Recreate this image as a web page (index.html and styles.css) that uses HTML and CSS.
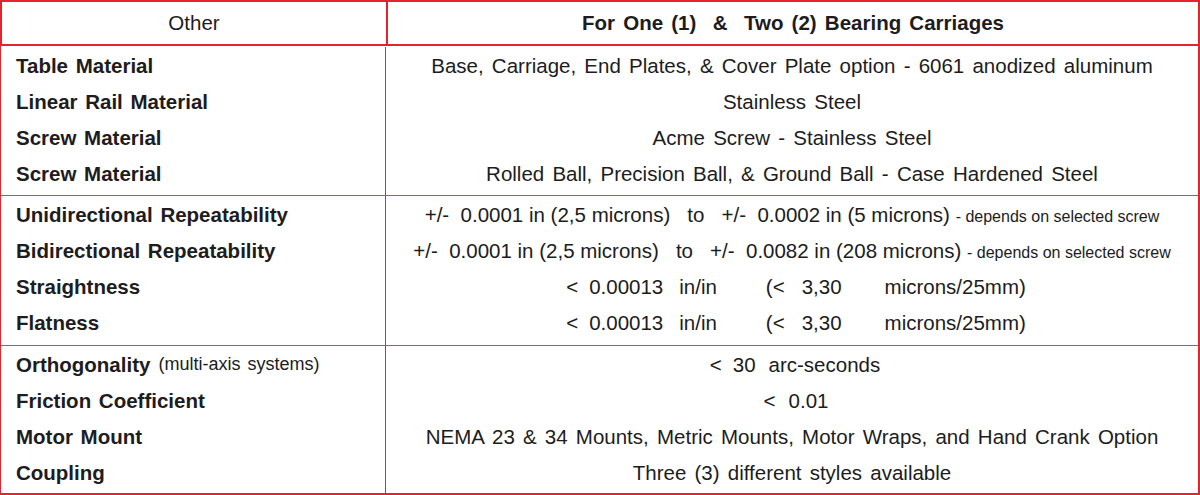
FILE: index.html
```html
<!DOCTYPE html>
<html>
<head>
<meta charset="utf-8">
<link rel="stylesheet" href="styles.css">
</head>
<body>
<div class="spec">
  <div class="head">
    <div class="hcell hleft">Other</div>
    <div class="hcell hright">For One (1) &nbsp;&amp;&nbsp; Two (2) Bearing Carriages</div>
  </div>
  <div class="body">
    <div class="section first">
      <div class="labels">
        <div class="row">Table Material</div>
        <div class="row">Linear Rail Material</div>
        <div class="row">Screw Material</div>
        <div class="row">Screw Material</div>
      </div>
      <div class="values">
        <div class="row">Base, Carriage, End Plates, &amp; Cover Plate option - 6061 anodized aluminum</div>
        <div class="row">Stainless Steel</div>
        <div class="row">Acme Screw - Stainless Steel</div>
        <div class="row">Rolled Ball, Precision Ball, &amp; Ground Ball - Case Hardened Steel</div>
      </div>
    </div>
    <div class="section">
      <div class="labels">
        <div class="row">Unidirectional Repeatability</div>
        <div class="row">Bidirectional Repeatability</div>
        <div class="row">Straightness</div>
        <div class="row">Flatness</div>
      </div>
      <div class="values">
        <div class="row"><span class="cond">+/-&nbsp; 0.0001 in (2,5 microns) &nbsp; to &nbsp; +/-&nbsp; 0.0002 in (5 microns) <span class="note">- depends on selected screw</span></span></div>
        <div class="row"><span class="cond">+/-&nbsp; 0.0001 in (2,5 microns) &nbsp; to &nbsp; +/-&nbsp; 0.0082 in (208 microns) <span class="note">- depends on selected screw</span></span></div>
        <div class="row"><span class="meas"><span>&lt;</span><span class="g1">0.00013</span><span class="g2">in/in</span><span class="g3">(&lt;</span><span class="g4">3,30</span><span class="g5">microns/25mm)</span></span></div>
        <div class="row"><span class="meas"><span>&lt;</span><span class="g1">0.00013</span><span class="g2">in/in</span><span class="g3">(&lt;</span><span class="g4">3,30</span><span class="g5">microns/25mm)</span></span></div>
      </div>
    </div>
    <div class="section last">
      <div class="labels">
        <div class="row">Orthogonality <span class="sub">(multi-axis systems)</span></div>
        <div class="row">Friction Coefficient</div>
        <div class="row">Motor Mount</div>
        <div class="row">Coupling</div>
      </div>
      <div class="values">
        <div class="row"><span class="meas2"><span>&lt;</span><span class="h1">30</span><span class="h2">arc-seconds</span></span></div>
        <div class="row"><span class="meas2 shift"><span>&lt;</span><span class="h3">0.01</span></span></div>
        <div class="row">NEMA 23 &amp; 34 Mounts, Metric Mounts, Motor Wraps, and Hand Crank Option</div>
        <div class="row">Three (3) different styles available</div>
      </div>
    </div>
  </div>
</div>
</body>
</html>
```

FILE: styles.css
```css
html, body {
  margin: 0;
  padding: 0;
  background: #ffffff;
}

body {
  font-family: "Liberation Sans", Arial, sans-serif;
  color: #201c1d;
  font-size: 20.5px;
}

.spec {
  width: 1200px;
  height: 495px;
  box-sizing: border-box;
}

.head {
  display: flex;
  height: 46px;
  box-sizing: border-box;
  border: 2px solid #e6232d;
}

.hcell {
  display: flex;
  align-items: center;
  justify-content: center;
  word-spacing: 2.5px;
}

.hleft {
  width: 384px;
  border-right: 2px solid #e6232d;
}

.hright {
  flex: 1;
  font-weight: bold;
}

.body {
  border-left: 1px solid #e6232d;
  border-right: 2px solid #e6232d;
  border-bottom: 2px solid #e6232d;
  height: 449px;
  box-sizing: border-box;
  display: flex;
  flex-direction: column;
}

.section {
  display: flex;
  height: 150px;
  box-sizing: border-box;
  border-bottom: 1px solid #ee3a45;
}

.section.first {
  padding-top: 1px;
}

.section.last {
  border-bottom: none;
  flex: 1;
}

.labels {
  width: 385px;
  border-right: 1px solid #e6232d;
  box-sizing: border-box;
  padding-left: 15px;
  font-weight: bold;
  word-spacing: 2px;
}

.values {
  flex: 1;
  text-align: center;
  word-spacing: 2.5px;
}

.row {
  height: 36px;
  padding-top: 1px;
  box-sizing: border-box;
  display: flex;
  align-items: center;
  white-space: nowrap;
}

.values .row {
  justify-content: center;
}

.sub {
  font-weight: normal;
  font-size: 18px;
  margin-left: 8px;
  word-spacing: 2px;
}

.cond {
  display: inline-block;
  word-spacing: 0;
}

.note {
  font-size: 16px;
}

.meas {
  display: flex;
  align-items: center;
  margin-left: 8px;
  word-spacing: 0;
}

.g1 { margin-left: 11px; }
.g2 { margin-left: 16px; }
.g3 { margin-left: 49px; }
.g4 { margin-left: 17px; }
.g5 { margin-left: 43px; }

.meas2 {
  display: flex;
  align-items: center;
  word-spacing: 0;
  margin-left: 6px;
}

.meas2.shift {
  margin-left: 8px;
}

.h1 { margin-left: 11px; }
.h2 { margin-left: 13px; }
.h3 { margin-left: 13px; }
```
